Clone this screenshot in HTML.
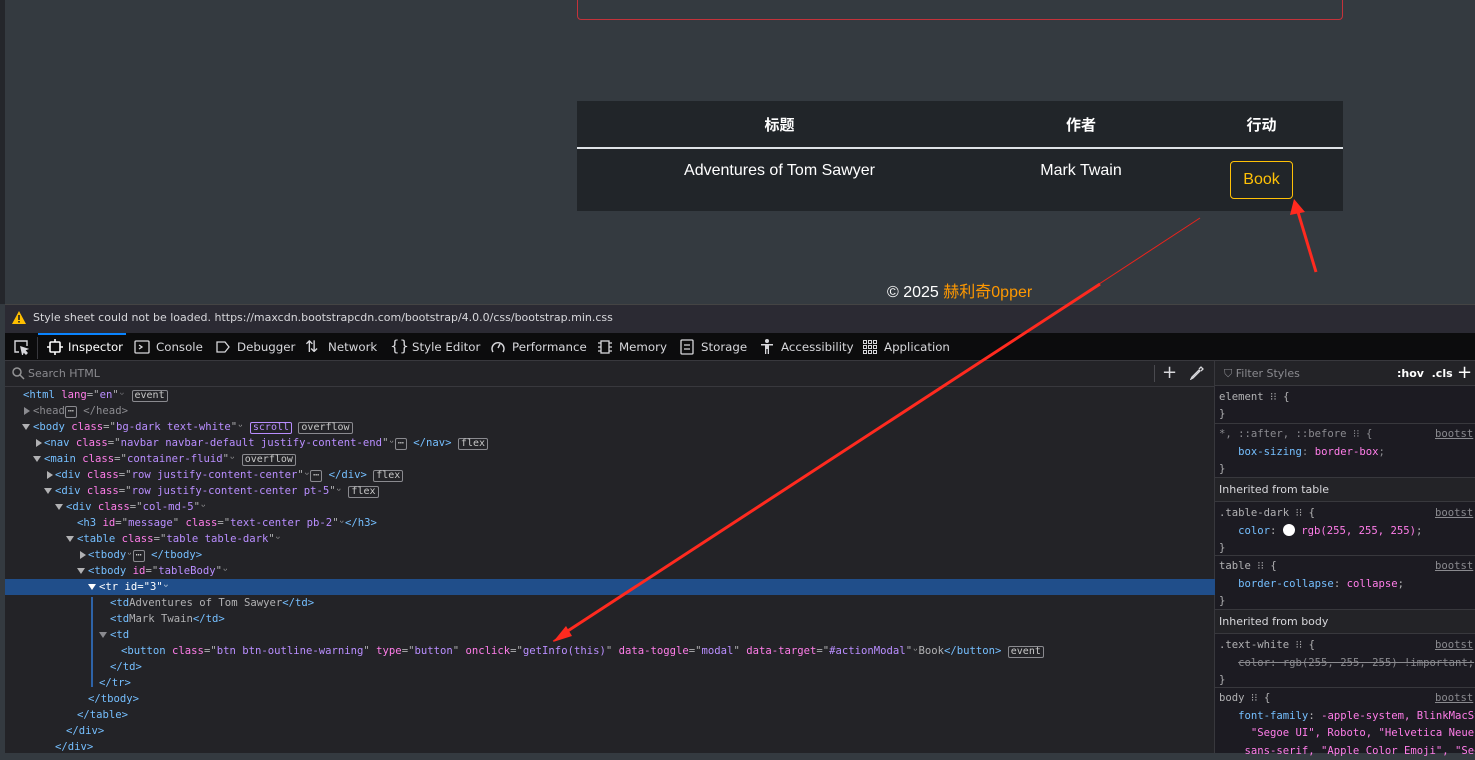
<!DOCTYPE html>
<html><head><meta charset="utf-8"><style>
*{box-sizing:border-box;margin:0;padding:0}
body{width:1475px;height:753px;overflow:hidden;background:#343a40;position:relative;font-family:"Liberation Sans","Noto Sans CJK SC",sans-serif}
.a{position:absolute;white-space:pre}
.m{font-family:"DejaVu Sans Mono","Liberation Mono",monospace;font-size:10.6px;color:#b1b1b3;line-height:16px}
.t{color:#75bfff}.n{color:#ff7de9}.v{color:#b98eff}.g{color:#8a8a8f}
.badge{display:inline-block;border:1px solid #8a8a8f;border-radius:2px;padding:0 2px;line-height:10px;font-size:10px;color:#c8c8c8}
.tri{position:absolute;width:0;height:0;border-left:4px solid transparent;border-right:4px solid transparent;border-top:6px solid #b1b1b3}
.trr{position:absolute;width:0;height:0;border-top:4px solid transparent;border-bottom:4px solid transparent;border-left:6px solid #b1b1b3}
.ui{font-family:"DejaVu Sans","Liberation Sans",sans-serif;font-size:11.8px;color:#d7d7db}
</style></head><body>
<div class="a" style="left:0;top:0;width:5px;height:304px;background:#24262b"></div>
<div class="a" style="left:577px;top:-5px;width:766px;height:25px;border:1px solid #c4323a;border-radius:4px"></div>
<div class="a" style="left:577px;top:101px;width:766px;height:110px;background:#212529"></div>
<div class="a" style="left:577px;top:147px;width:766px;height:2px;background:#dee2e6"></div>
<div class="a" style="left:577px;top:114px;width:405px;text-align:center;color:#fff;font-weight:bold;font-size:15px">标题</div>
<div class="a" style="left:1040px;top:114px;width:82px;text-align:center;color:#fff;font-weight:bold;font-size:15px">作者</div>
<div class="a" style="left:1230px;top:114px;width:63px;text-align:center;color:#fff;font-weight:bold;font-size:15px">行动</div>
<div class="a" style="left:577px;top:162px;width:405px;text-align:center;color:#fff;font-size:16px">Adventures of Tom Sawyer</div>
<div class="a" style="left:1030px;top:162px;width:102px;text-align:center;color:#fff;font-size:16px">Mark Twain</div>
<div class="a" style="left:1230px;top:161px;width:63px;height:38px;border:1px solid #ffc107;border-radius:4px;color:#ffc107;font-size:16px;text-align:center;line-height:36px">Book</div>
<div class="a" style="left:887px;top:278px;color:#fff;font-size:16px">© 2025 <span style="color:#ff9800">赫利奇0pper</span></div>

<!-- devtools -->
<div class="a" style="left:5px;top:304px;width:1470px;height:29px;background:#2b2a33;border-top:1px solid #444"></div>
<svg class="a" style="left:11px;top:310px" width="16" height="16"><path d="M8 1L15 14H1Z" fill="#ffbf00"/><rect x="7.2" y="5" width="1.6" height="5" fill="#222"/><rect x="7.2" y="11" width="1.6" height="1.6" fill="#222"/></svg>
<div class="a ui" style="left:33px;top:311px;font-size:11px;color:#d7d7db">Style sheet could not be loaded. https://maxcdn.bootstrapcdn.com/bootstrap/4.0.0/css/bootstrap.min.css</div>
<div class="a" style="left:5px;top:333px;width:1470px;height:28px;background:#0c0c0d;border-bottom:1px solid #38383d"></div>
<div class="a" style="left:38px;top:333px;width:88px;height:2px;background:#0a84ff"></div>
<div class="a" style="left:37px;top:337px;width:1px;height:22px;background:#38383d"></div>
<svg class="a" style="left:13px;top:339px" width="16" height="16" fill="none" stroke="#d7d7db" stroke-width="1.4"><path d="M6 13H2V2h12v5"/><path d="M8 8l6 2-2.5 1L14 14l-1 1-2.5-2.5L9.5 15z" fill="#d7d7db"/></svg>
<svg class="a" style="left:47px;top:339px" width="16" height="16" fill="none" stroke="#fff" stroke-width="1.6"><rect x="3" y="3" width="10" height="10" rx="1"/><path d="M8 0v3M8 13v3M0 8h3M13 8h3"/></svg>
<div class="a ui" style="left:68px;top:340px;color:#fff">Inspector</div>
<svg class="a" style="left:134px;top:339px" width="16" height="16" fill="none" stroke="#d7d7db" stroke-width="1.3"><rect x="1" y="2" width="14" height="12" rx="1"/><path d="M5 6l3 2-3 2"/></svg>
<div class="a ui" style="left:156px;top:340px">Console</div>
<svg class="a" style="left:215px;top:339px" width="16" height="16" fill="none" stroke="#d7d7db" stroke-width="1.3"><path d="M2 3h8l4 5-4 5H2z"/></svg>
<div class="a ui" style="left:237px;top:340px">Debugger</div>
<div class="a ui" style="left:305px;top:337px;font-size:16px">⇅</div>
<div class="a ui" style="left:328px;top:340px">Network</div>
<div class="a ui" style="left:390px;top:337px;font-size:15px">{}</div>
<div class="a ui" style="left:412px;top:340px">Style Editor</div>
<svg class="a" style="left:490px;top:339px" width="16" height="16" fill="none" stroke="#d7d7db" stroke-width="1.4"><path d="M3 13A6 6 0 1 1 13 13"/><path d="M8 9l2-4"/></svg>
<div class="a ui" style="left:512px;top:340px">Performance</div>
<svg class="a" style="left:597px;top:339px" width="16" height="16" fill="none" stroke="#d7d7db" stroke-width="1.3"><rect x="4" y="2" width="8" height="12"/><path d="M1 4h3M1 8h3M1 12h3M12 4h3M12 8h3M12 12h3"/></svg>
<div class="a ui" style="left:619px;top:340px">Memory</div>
<svg class="a" style="left:679px;top:339px" width="16" height="16" fill="none" stroke="#d7d7db" stroke-width="1.3"><rect x="2" y="1" width="12" height="14" rx="1"/><path d="M5 6h6M5 10h6"/></svg>
<div class="a ui" style="left:701px;top:340px">Storage</div>
<svg class="a" style="left:759px;top:338px" width="16" height="17" fill="#d7d7db"><circle cx="8" cy="3" r="2"/><path d="M2 6h12v1.5H10V16H8.7v-5h-1.4v5H6V7.5H2z"/></svg>
<div class="a ui" style="left:781px;top:340px">Accessibility</div>
<svg class="a" style="left:862px;top:339px" width="16" height="16" fill="none" stroke="#d7d7db" stroke-width="1"><rect x="1.5" y="1.5" width="3" height="3"/><rect x="6.5" y="1.5" width="3" height="3"/><rect x="11.5" y="1.5" width="3" height="3"/><rect x="1.5" y="6.5" width="3" height="3"/><rect x="6.5" y="6.5" width="3" height="3"/><rect x="11.5" y="6.5" width="3" height="3"/><rect x="1.5" y="11.5" width="3" height="3"/><rect x="6.5" y="11.5" width="3" height="3"/><rect x="11.5" y="11.5" width="3" height="3"/></svg>
<div class="a ui" style="left:884px;top:340px">Application</div>

<div class="a" style="left:5px;top:361px;width:1210px;height:392px;background:#232327"></div>
<div class="a" style="left:5px;top:386px;width:1210px;height:1px;background:#38383d"></div>
<svg class="a" style="left:12px;top:367px" width="13" height="13" fill="none" stroke="#939395" stroke-width="1.5"><circle cx="5" cy="5" r="4"/><path d="M8 8l4 4"/></svg>
<div class="a ui" style="left:28px;top:367px;font-size:11px;color:#8a8a8f">Search HTML</div>
<div class="a" style="left:1154px;top:365px;width:1px;height:17px;background:#4a4a4f"></div>
<div class="a ui" style="left:1162px;top:362px;font-size:18px;color:#d7d7db">+</div>
<svg class="a" style="left:1190px;top:366px" width="14" height="14" fill="none" stroke="#d7d7db" stroke-width="1.3"><path d="M1 13l2-1 7-7-1-1-7 7z"/><path d="M9 3l2-2 2 2-2 2"/></svg>
<div class="a" style="left:1214px;top:361px;width:1px;height:392px;background:#38383d"></div>

<div class="a" style="left:5px;top:579px;width:1210px;height:16px;background:#204e8a"></div>
<div class="a" style="left:91px;top:597px;width:2px;height:90px;background:#2e63a8"></div>

<div class="a m" style="left:23px;top:387px"><span class="t">&lt;html</span> <span class="n">lang</span>="<span class="v">en</span>"<span class="g">ᵕ</span> <span class="badge">event</span></div>
<div class="trr" style="left:24px;top:407px;border-left-color:#8a8a8f"></div>
<div class="a m" style="left:33px;top:403px;color:#8a8a8f">&lt;head<span class="badge">⋯</span> &lt;/head&gt;</div>
<div class="tri" style="left:22px;top:424px"></div>
<div class="a m" style="left:33px;top:419px"><span class="t">&lt;body</span> <span class="n">class</span>="<span class="v">bg-dark text-white</span>"ᵕ <span class="badge" style="border-color:#b98eff;color:#b98eff">scroll</span> <span class="badge">overflow</span></div>
<div class="trr" style="left:36px;top:439px"></div>
<div class="a m" style="left:44px;top:435px"><span class="t">&lt;nav</span> <span class="n">class</span>="<span class="v">navbar navbar-default justify-content-end</span>"ᵕ<span class="badge">⋯</span> <span class="t">&lt;/nav&gt;</span> <span class="badge">flex</span></div>
<div class="tri" style="left:33px;top:456px"></div>
<div class="a m" style="left:44px;top:451px"><span class="t">&lt;main</span> <span class="n">class</span>="<span class="v">container-fluid</span>"ᵕ <span class="badge">overflow</span></div>
<div class="trr" style="left:47px;top:471px"></div>
<div class="a m" style="left:55px;top:467px"><span class="t">&lt;div</span> <span class="n">class</span>="<span class="v">row justify-content-center</span>"ᵕ<span class="badge">⋯</span> <span class="t">&lt;/div&gt;</span> <span class="badge">flex</span></div>
<div class="tri" style="left:44px;top:488px"></div>
<div class="a m" style="left:55px;top:483px"><span class="t">&lt;div</span> <span class="n">class</span>="<span class="v">row justify-content-center pt-5</span>"ᵕ <span class="badge">flex</span></div>
<div class="tri" style="left:55px;top:504px"></div>
<div class="a m" style="left:66px;top:499px"><span class="t">&lt;div</span> <span class="n">class</span>="<span class="v">col-md-5</span>"ᵕ</div>
<div class="a m" style="left:77px;top:515px"><span class="t">&lt;h3</span> <span class="n">id</span>="<span class="v">message</span>" <span class="n">class</span>="<span class="v">text-center pb-2</span>"ᵕ<span class="t">&lt;/h3&gt;</span></div>
<div class="tri" style="left:66px;top:536px"></div>
<div class="a m" style="left:77px;top:531px"><span class="t">&lt;table</span> <span class="n">class</span>="<span class="v">table table-dark</span>"ᵕ</div>
<div class="trr" style="left:80px;top:551px"></div>
<div class="a m" style="left:88px;top:547px"><span class="t">&lt;tbody</span>ᵕ<span class="badge">⋯</span> <span class="t">&lt;/tbody&gt;</span></div>
<div class="tri" style="left:77px;top:568px"></div>
<div class="a m" style="left:88px;top:563px"><span class="t">&lt;tbody</span> <span class="n">id</span>="<span class="v">tableBody</span>"ᵕ</div>
<div class="tri" style="left:88px;top:584px;border-top-color:#fff"></div>
<div class="a m" style="left:99px;top:579px;color:#fff">&lt;tr id="3"ᵕ</div>
<div class="a m" style="left:110px;top:595px"><span class="t">&lt;td</span>Adventures of Tom Sawyer<span class="t">&lt;/td&gt;</span></div>
<div class="a m" style="left:110px;top:611px"><span class="t">&lt;td</span>Mark Twain<span class="t">&lt;/td&gt;</span></div>
<div class="tri" style="left:99px;top:632px;border-top-color:#8a8a8f"></div>
<div class="a m" style="left:110px;top:627px"><span class="t">&lt;td</span></div>
<div class="a m" style="left:121px;top:643px"><span class="t">&lt;button</span> <span class="n">class</span>="<span class="v">btn btn-outline-warning</span>" <span class="n">type</span>="<span class="v">button</span>" <span class="n">onclick</span>="<span class="v">getInfo(this)</span>" <span class="n">data-toggle</span>="<span class="v">modal</span>" <span class="n">data-target</span>="<span class="v">#actionModal</span>"ᵕBook<span class="t">&lt;/button&gt;</span> <span class="badge">event</span></div>
<div class="a m" style="left:110px;top:659px"><span class="t">&lt;/td&gt;</span></div>
<div class="a m" style="left:99px;top:675px"><span class="t">&lt;/tr&gt;</span></div>
<div class="a m" style="left:88px;top:691px"><span class="t">&lt;/tbody&gt;</span></div>
<div class="a m" style="left:77px;top:707px"><span class="t">&lt;/table&gt;</span></div>
<div class="a m" style="left:66px;top:723px"><span class="t">&lt;/div&gt;</span></div>
<div class="a m" style="left:55px;top:739px"><span class="t">&lt;/div&gt;</span></div>

<!-- rules pane -->
<div class="a" style="left:1215px;top:361px;width:260px;height:392px;background:#1c1b22"></div>
<div class="a" style="left:1215px;top:361px;width:260px;height:25px;background:#232327;border-bottom:1px solid #38383d"></div>
<div class="a ui" style="left:1224px;top:367px;font-size:11px;color:#8a8a8f">⛉ Filter Styles</div>
<div class="a ui" style="left:1397px;top:367px;font-size:11px;color:#fff;font-weight:bold">:hov &nbsp;.cls</div>
<div class="a ui" style="left:1457px;top:362px;font-size:18px;color:#fff">+</div>
<div class="a m" style="left:1219px;top:389px;line-height:16.5px">element ⁝⁝ {
}</div>
<div class="a" style="left:1215px;top:423px;width:260px;height:1px;background:#38383d"></div>
<div class="a m" style="left:1219px;top:426px;line-height:17.5px;color:#8a8a8f">*, ::after, ::before ⁝⁝ {
   <span class="t">box-sizing</span>: <span class="n">border-box</span>;
<span style="color:#b1b1b3">}</span></div>
<div class="a m" style="left:1435px;top:426px;color:#8a8a8f;text-decoration:underline">bootst</div>
<div class="a" style="left:1215px;top:477px;width:260px;height:25px;background:#232327;border-top:1px solid #38383d;border-bottom:1px solid #38383d"></div>
<div class="a ui" style="left:1219px;top:483px;font-size:11px;color:#d7d7db">Inherited from table</div>
<div class="a m" style="left:1219px;top:505px;line-height:17.5px">.table-dark ⁝⁝ {
   <span class="t">color</span>: <span style="display:inline-block;width:12px;height:12px;border-radius:6px;background:#fff;vertical-align:-2px"></span> <span class="n">rgb(255, 255, 255)</span>;
}</div>
<div class="a m" style="left:1435px;top:505px;color:#8a8a8f;text-decoration:underline">bootst</div>
<div class="a" style="left:1215px;top:555px;width:260px;height:1px;background:#38383d"></div>
<div class="a m" style="left:1219px;top:558px;line-height:17.5px">table ⁝⁝ {
   <span class="t">border-collapse</span>: <span class="n">collapse</span>;
}</div>
<div class="a m" style="left:1435px;top:558px;color:#8a8a8f;text-decoration:underline">bootst</div>
<div class="a" style="left:1215px;top:609px;width:260px;height:25px;background:#232327;border-top:1px solid #38383d;border-bottom:1px solid #38383d"></div>
<div class="a ui" style="left:1219px;top:615px;font-size:11px;color:#d7d7db">Inherited from body</div>
<div class="a m" style="left:1219px;top:637px;line-height:17.5px">.text-white ⁝⁝ {
   <span style="color:#8a8a8f;text-decoration:line-through">color: rgb(255, 255, 255) !important;</span>
}</div>
<div class="a m" style="left:1435px;top:637px;color:#8a8a8f;text-decoration:underline">bootst</div>
<div class="a" style="left:1215px;top:687px;width:260px;height:1px;background:#38383d"></div>
<div class="a m" style="left:1219px;top:690px;line-height:17.5px">body ⁝⁝ {
   <span class="t">font-family</span>: <span class="n">-apple-system, BlinkMacSystemFont,</span>
<span class="n">     "Segoe UI", Roboto, "Helvetica Neue", Arial,</span>
<span class="n">    sans-serif, "Apple Color Emoji", "Segoe"</span></div>
<div class="a m" style="left:1435px;top:690px;color:#8a8a8f;text-decoration:underline">bootst</div>

<svg class="a" style="left:0;top:0" width="1475" height="753">
<path d="M1200 218 L553 641" stroke="#e8231c" stroke-width="1" fill="none"/>
<path d="M1100 284 L560 636" stroke="#ff2a1f" stroke-width="3" fill="none"/>
<path d="M553 642 L566 626 L572 636 Z" fill="#ff2a1f"/>
<path d="M1316 272 L1298 212" stroke="#ff2a1f" stroke-width="3" fill="none"/>
<path d="M1294 199 L1290 215 L1305 212 Z" fill="#ff2a1f"/>
</svg>
</body></html>
